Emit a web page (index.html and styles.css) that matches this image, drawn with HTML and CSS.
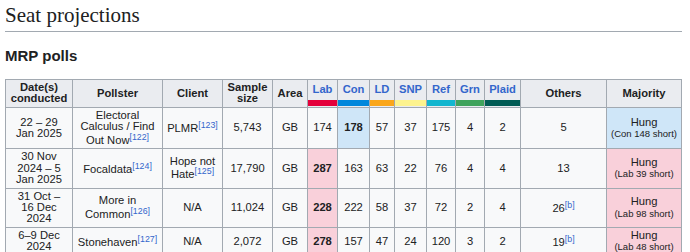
FILE: index.html
```html
<!DOCTYPE html>
<html lang="en">
<head>
<meta charset="utf-8">
<title>Seat projections</title>
<link rel="stylesheet" href="styles.css">
</head>
<body>
<div class="page">
  <h2 class="section-title">Seat projections</h2>
  <h3 class="sub-title">MRP polls</h3>
  <table class="polls">
    <colgroup>
      <col class="c-date"><col class="c-pollster"><col class="c-client"><col class="c-sample"><col class="c-area">
      <col class="c-lab"><col class="c-con"><col class="c-ld"><col class="c-snp"><col class="c-ref"><col class="c-grn"><col class="c-plaid">
      <col class="c-others"><col class="c-major">
    </colgroup>
    <thead>
      <tr>
        <th>Date(s)<br>conducted</th>
        <th>Pollster</th>
        <th>Client</th>
        <th>Sample<br>size</th>
        <th>Area</th>
        <th class="party"><span class="pname">Lab</span><span class="bar lab"></span></th>
        <th class="party"><span class="pname">Con</span><span class="bar con"></span></th>
        <th class="party"><span class="pname">LD</span><span class="bar ld"></span></th>
        <th class="party"><span class="pname">SNP</span><span class="bar snp"></span></th>
        <th class="party"><span class="pname">Ref</span><span class="bar ref"></span></th>
        <th class="party"><span class="pname">Grn</span><span class="bar grn"></span></th>
        <th class="party"><span class="pname">Plaid</span><span class="bar plaid"></span></th>
        <th>Others</th>
        <th>Majority</th>
      </tr>
    </thead>
    <tbody>
      <tr>
        <td>22 – 29<br>Jan 2025</td>
        <td>Electoral<br>Calculus / Find<br>Out Now<sup class="ref">[122]</sup></td>
        <td>PLMR<sup class="ref">[123]</sup></td>
        <td>5,743</td>
        <td>GB</td>
        <td>174</td>
        <td class="win-con">178</td>
        <td>57</td>
        <td>37</td>
        <td>175</td>
        <td>4</td>
        <td>2</td>
        <td>5</td>
        <td class="maj-con">Hung<br><span class="short">(Con 148 short)</span></td>
      </tr>
      <tr>
        <td>30 Nov<br>2024 – 5<br>Jan 2025</td>
        <td>Focaldata<sup class="ref">[124]</sup></td>
        <td>Hope not<br>Hate<sup class="ref">[125]</sup></td>
        <td>17,790</td>
        <td>GB</td>
        <td class="win-lab">287</td>
        <td>163</td>
        <td>63</td>
        <td>22</td>
        <td>76</td>
        <td>4</td>
        <td>4</td>
        <td>13</td>
        <td class="maj-lab">Hung<br><span class="short">(Lab 39 short)</span></td>
      </tr>
      <tr>
        <td>31 Oct –<br>16 Dec<br>2024</td>
        <td>More in<br>Common<sup class="ref">[126]</sup></td>
        <td>N/A</td>
        <td>11,024</td>
        <td>GB</td>
        <td class="win-lab">228</td>
        <td>222</td>
        <td>58</td>
        <td>37</td>
        <td>72</td>
        <td>2</td>
        <td>4</td>
        <td>26<sup class="ref">[b]</sup></td>
        <td class="maj-lab">Hung<br><span class="short">(Lab 98 short)</span></td>
      </tr>
      <tr>
        <td>6–9 Dec<br>2024</td>
        <td>Stonehaven<sup class="ref">[127]</sup></td>
        <td>N/A</td>
        <td>2,072</td>
        <td>GB</td>
        <td class="win-lab">278</td>
        <td>157</td>
        <td>47</td>
        <td>24</td>
        <td>120</td>
        <td>3</td>
        <td>2</td>
        <td>19<sup class="ref">[b]</sup></td>
        <td class="maj-lab">Hung<br><span class="short">(Lab 48 short)</span></td>
      </tr>
    </tbody>
  </table>
</div>
</body>
</html>
```

FILE: styles.css
```css
html, body {
  margin: 0;
  padding: 0;
  background: #ffffff;
}

.page {
  padding: 0 8px 0 5px;
  color: #202122;
  font-family: "Liberation Sans", Arial, sans-serif;
}

.section-title {
  margin: 0;
  padding-top: 3px;
  height: 28px;
  font-family: "Liberation Serif", "Times New Roman", serif;
  font-weight: normal;
  font-size: 21px;
  line-height: 24px;
  border-bottom: 1px solid #a2a9b1;
  width: 677px;
  box-sizing: content-box;
}

.sub-title {
  margin: 0;
  padding-top: 14px;
  height: 33px;
  font-size: 15px;
  line-height: 20px;
  font-weight: bold;
}

.polls {
  border-collapse: collapse;
  table-layout: fixed;
  width: 677px;
  font-size: 11.2px;
  line-height: 11.3px;
  text-align: center;
  background: #f8f9fa;
  color: #202122;
}

.c-date { width: 67px; }
.c-pollster { width: 90px; }
.c-client { width: 60px; }
.c-sample { width: 50px; }
.c-area { width: 35px; }
.c-lab { width: 30px; }
.c-con { width: 32px; }
.c-ld { width: 25px; }
.c-snp { width: 32px; }
.c-ref { width: 29px; }
.c-grn { width: 29px; }
.c-plaid { width: 36px; }
.c-others { width: 86px; }
.c-major { width: 75px; }

.polls th,
.polls td {
  border: 1px solid #a2a9b1;
  padding: 2.2px 3px;
  vertical-align: middle;
}

.polls th {
  background: #eaecf0;
  font-weight: bold;
  height: 22px;
}

.polls th.party {
  padding: 0;
  vertical-align: top;
}

.pname {
  display: block;
  height: 20px;
  line-height: 19px;
  color: #3366cc;
}

.bar {
  display: block;
  height: 6px;
}

.bar.lab { background: #e4003b; }
.bar.con { background: #0087dc; }
.bar.ld { background: #faa61a; }
.bar.snp { background: #fdf38e; }
.bar.ref { background: #12b6cf; }
.bar.grn { background: #3fa35c; }
.bar.plaid { background: #005b54; }

.ref {
  font-size: 8.8px;
  line-height: 1;
  vertical-align: 4px;
  color: #3366cc;
}

.win-con {
  background: #cfe6f8;
  font-weight: bold;
}

.win-lab {
  background: #f9d0da;
  font-weight: bold;
}

.maj-con { background: #cfe6f8; }
.maj-lab { background: #f9d0da; }

.short {
  font-size: 9.5px;
  line-height: 10px;
}
```
